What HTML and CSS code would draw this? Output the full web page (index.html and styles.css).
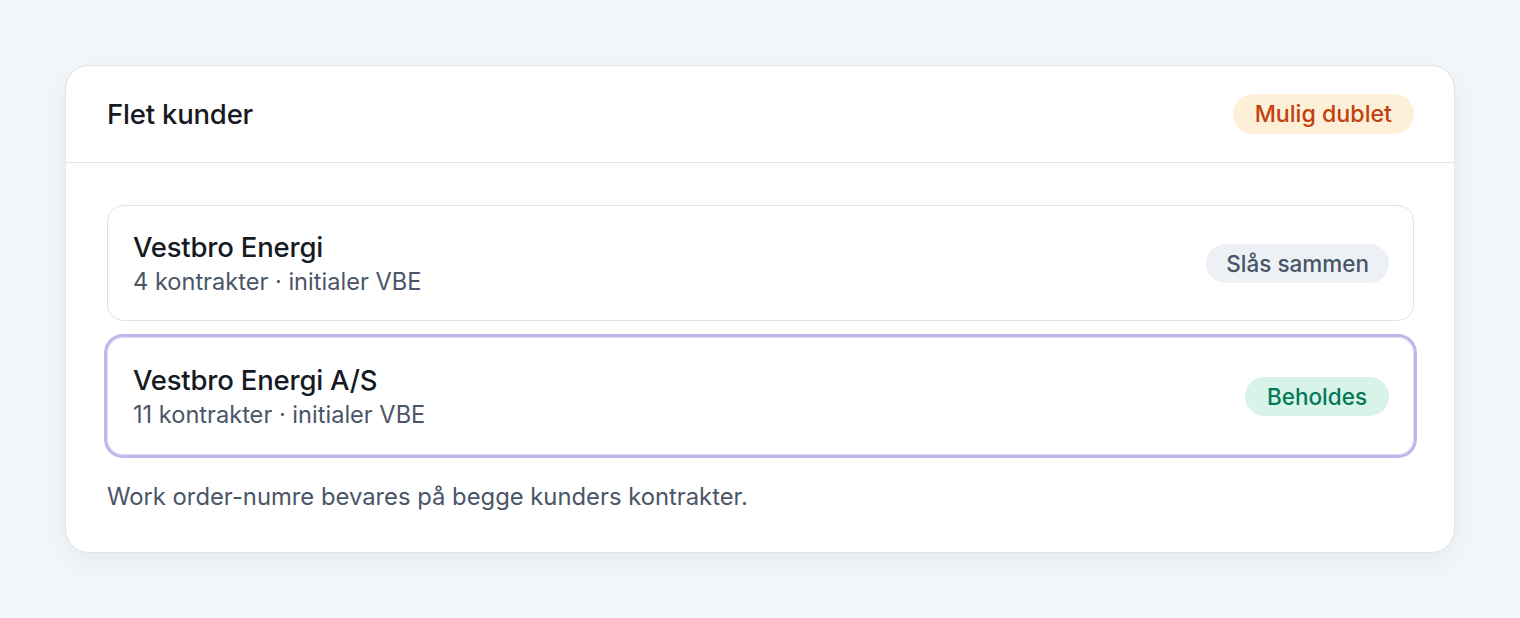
FILE: index.html
```html
<!DOCTYPE html>
<html>
<head>
    <title>Flet kunder</title>
    <link rel="stylesheet" href="styles.css">
</head>
<body>
    <div class="card">
        <div class="card-header">
            <h1>Flet kunder</h1>
            <span class="badge badge-warn">Mulig dublet</span>
        </div>
        <div class="card-body">
            <div class="customer">
                <div class="customer-info">
                    <div class="customer-name">Vestbro Energi</div>
                    <div class="customer-meta">4 kontrakter · initialer VBE</div>
                </div>
                <span class="pill pill-merge">Slås sammen</span>
            </div>
            <div class="customer selected">
                <div class="customer-info">
                    <div class="customer-name">Vestbro Energi A/S</div>
                    <div class="customer-meta">11 kontrakter · initialer VBE</div>
                </div>
                <span class="pill pill-keep">Beholdes</span>
            </div>
            <p class="note">Work order-numre bevares på begge kunders kontrakter.</p>
        </div>
    </div>
</body>
</html>
```

FILE: styles.css
```css
body {
    margin: 0;
    padding: 65px 65px;
    background: #f4f7fa;
    font-family: Inter, "Noto Sans", sans-serif;
    color: #161a23;
}
.card {
    background: #fff;
    border: 1px solid #dfe4ec;
    border-radius: 24px;
    box-shadow: 0 10px 30px rgba(30, 41, 59, 0.07);
}
.card-header {
    display: flex;
    align-items: center;
    justify-content: space-between;
    height: 96px;
    padding: 0 40px 0 41px;
    border-bottom: 1px solid #dfe4ec;
}
.card-header h1 {
    margin: 0;
    font-size: 27.5px;
    font-weight: 500;
    letter-spacing: -0.2px;
}
.badge {
    padding: 0 22px;
    height: 40px;
    line-height: 40px;
    border-radius: 20px;
    font-size: 23.2px;
    font-weight: 500;
}
.badge-warn {
    background: #feefd9;
    color: #c2410c;
}
.card-body {
    padding: 42px 40px 39px 41px;
}
.customer {
    display: flex;
    align-items: center;
    justify-content: space-between;
    height: 114px;
    padding: 0 24px 0 25px;
    border: 1px solid #dfe4ec;
    border-radius: 16px;
    margin-bottom: 16px;
}
.customer.selected {
    height: 116px;
    border-color: #dcdcf2;
    box-shadow: 0 0 0 3px #bcb8ec;
}
.customer-name {
    font-size: 27.5px;
    font-weight: 500;
    line-height: 36px;
    letter-spacing: -0.2px;
}
.customer-meta {
    margin-top: 1px;
    font-size: 23.6px;
    line-height: 32px;
    color: #4a5568;
}
.pill {
    height: 39px;
    line-height: 39px;
    padding: 0 20px;
    border-radius: 20px;
    font-size: 22.5px;
    font-weight: 500;
}
.pill-merge {
    background: #edf1f6;
    color: #475569;
}
.pill-keep {
    padding: 0 22px;
    background: #d8f3e8;
    color: #047857;
}
.note {
    margin: 26px 0 0;
    font-size: 23.8px;
    line-height: 32px;
    color: #4a5568;
}
```
